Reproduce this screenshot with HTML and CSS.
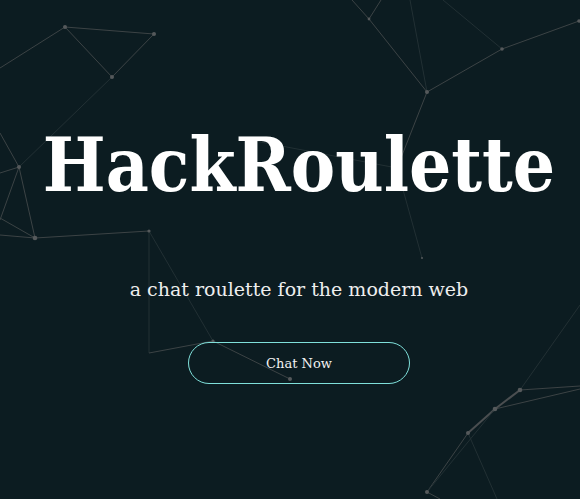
FILE: index.html
```html
<!DOCTYPE html>
<html lang="en">
<head>
<meta charset="utf-8">
<title>HackRoulette</title>
<link rel="stylesheet" href="styles.css">
</head>
<body>
<div class="page">
  <svg class="network" viewBox="0 0 580 499" width="580" height="499" aria-hidden="true">
    <g class="lines">
      <line x1="65" y1="27" x2="154" y2="34"/>
      <line x1="65" y1="27" x2="112" y2="77"/>
      <line x1="154" y1="34" x2="112" y2="77"/>
      <line x1="65" y1="27" x2="0" y2="68"/>
      <line class="faint" x1="112" y1="77" x2="19" y2="167"/>
      <line x1="19" y1="167" x2="35" y2="238"/>
      <line x1="0" y1="133" x2="19" y2="167"/>
      <line x1="19" y1="167" x2="0" y2="173"/>
      <line x1="19" y1="167" x2="0" y2="220"/>
      <line x1="0" y1="218" x2="35" y2="238"/>
      <line x1="0" y1="235" x2="35" y2="238"/>
      <line x1="35" y1="238" x2="149" y2="231"/>
      <line class="faint" x1="149" y1="231" x2="149" y2="353"/>
      <line class="faint" x1="149" y1="231" x2="213" y2="341"/>
      <line x1="149" y1="353" x2="213" y2="341"/>
      <line x1="213" y1="341" x2="290" y2="379"/>
      <line x1="352" y1="0" x2="369" y2="19"/>
      <line x1="381" y1="0" x2="369" y2="19"/>
      <line x1="369" y1="19" x2="427" y2="92"/>
      <line class="faint" x1="410" y1="0" x2="427" y2="92"/>
      <line x1="427" y1="92" x2="502" y2="49"/>
      <line class="faint" x1="443" y1="0" x2="502" y2="49"/>
      <line x1="502" y1="49" x2="579" y2="21"/>
      <line x1="427" y1="92" x2="397" y2="168"/>
      <line class="faint" x1="397" y1="168" x2="422" y2="258"/>
      <line class="faint" x1="250" y1="140" x2="397" y2="168"/>
      <line x1="520" y1="390" x2="580" y2="386"/>
      <line x1="495" y1="409" x2="580" y2="389"/>
      <line class="thick" x1="520" y1="390" x2="495" y2="409"/>
      <line class="thick" x1="495" y1="409" x2="468" y2="433"/>
      <line x1="468" y1="433" x2="427" y2="492"/>
      <line class="faint" x1="495" y1="409" x2="427" y2="492"/>
      <line class="faint" x1="520" y1="390" x2="580" y2="305"/>
      <line class="faint" x1="468" y1="433" x2="497" y2="499"/>
      <line x1="427" y1="492" x2="440" y2="499"/>
    </g>
    <g class="dots">
      <circle cx="65" cy="27" r="2"/>
      <circle cx="154" cy="34" r="2"/>
      <circle cx="112" cy="77" r="2"/>
      <circle cx="19" cy="167" r="2"/>
      <circle cx="35" cy="238" r="2.3"/>
      <circle cx="149" cy="231" r="1.6"/>
      <circle cx="213" cy="341" r="1.6"/>
      <circle cx="290" cy="379" r="2"/>
      <circle cx="369" cy="19" r="1.4"/>
      <circle cx="427" cy="92" r="2"/>
      <circle cx="502" cy="49" r="1.8"/>
      <circle cx="579" cy="21" r="1.8"/>
      <circle cx="422" cy="258" r="1"/>
      <circle cx="520" cy="390" r="2.3"/>
      <circle cx="495" cy="409" r="2.3"/>
      <circle cx="468" cy="433" r="2"/>
      <circle cx="427" cy="492" r="2"/>
    </g>
  </svg>
  <main class="hero">
    <h1 class="title">HackRoulette</h1>
    <p class="tagline">a chat roulette for the modern web</p>
    <a class="cta" href="#">Chat Now</a>
  </main>
</div>
</body>
</html>
```

FILE: styles.css
```css
html, body {
  margin: 0;
  padding: 0;
  background: #0c1c21;
}

.page {
  position: relative;
  width: 580px;
  height: 499px;
  overflow: hidden;
  background: #0c1c21;
  font-family: "DejaVu Serif", "Liberation Serif", serif;
}

.network {
  position: absolute;
  left: 0;
  top: 0;
}

.lines line {
  stroke: #3c4345;
  stroke-width: 1;
}

.lines line.faint {
  stroke: #223034;
}

.lines line.thick {
  stroke: #4a4e50;
  stroke-width: 2;
}

.dots circle {
  fill: #55595b;
}

.hero {
  position: relative;
  display: flex;
  flex-direction: column;
  align-items: center;
  padding-top: 117px;
  padding-left: 18px;
}

.title {
  margin: 0;
  color: #ffffff;
  font-family: "DejaVu Serif Condensed", "DejaVu Serif", serif;
  font-stretch: condensed;
  font-weight: bold;
  font-size: 74px;
  line-height: 96px;
  white-space: nowrap;
}

.tagline {
  margin: 63px 0 0;
  color: #eeeeee;
  font-size: 19px;
  line-height: 26px;
}

.cta {
  margin-top: 40px;
  box-sizing: border-box;
  width: 222px;
  height: 42px;
  display: flex;
  align-items: center;
  justify-content: center;
  border: 1px solid #7fe0da;
  border-radius: 21px;
  color: #f2f2f2;
  text-decoration: none;
  font-size: 13px;
}
```
